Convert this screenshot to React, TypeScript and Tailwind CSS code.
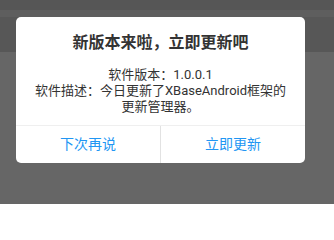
import React from 'react'

const font = { fontFamily: 'Roboto, "Noto Sans CJK SC", sans-serif' }

export default function App() {
  return (
    <div className="relative w-[334px] h-[204px] flex flex-col bg-[#666666] overflow-hidden" style={font}>
      {/* dimmed page behind the dialog */}
      <div className="h-[10px] bg-[#565656]" />
      <div className="h-[7px] bg-[#5e5e5e]" />
      <div className="h-[35px] bg-[#575757]" />
      <div className="flex-1 bg-[#666666]" />

      {/* Update dialog */}
      <div className="absolute left-[16px] top-[17px] w-[289px] bg-white rounded-[5px] flex flex-col overflow-hidden">
        <div className="pt-[14px] text-center text-[16px] leading-[24px] font-bold text-[#333333]">
          新版本来啦，立即更新吧
        </div>
        <div className="mt-[12px] mb-[10px] px-[16px] text-center text-[13px] leading-[16px] text-[#333333]">
          软件版本：1.0.0.1
          <br />
          软件描述：今日更新了XBaseAndroid框架的
          <br />
          更新管理器。
        </div>
        <div className="flex h-[38px] border-t border-[#efefef]">
          <button className="flex-1 flex items-center justify-center text-[14px] text-[#2196f3]">下次再说</button>
          <div className="w-px bg-[#e2e2e2]" />
          <button className="flex-1 flex items-center justify-center text-[14px] text-[#2196f3]">立即更新</button>
        </div>
      </div>
    </div>
  )
}
